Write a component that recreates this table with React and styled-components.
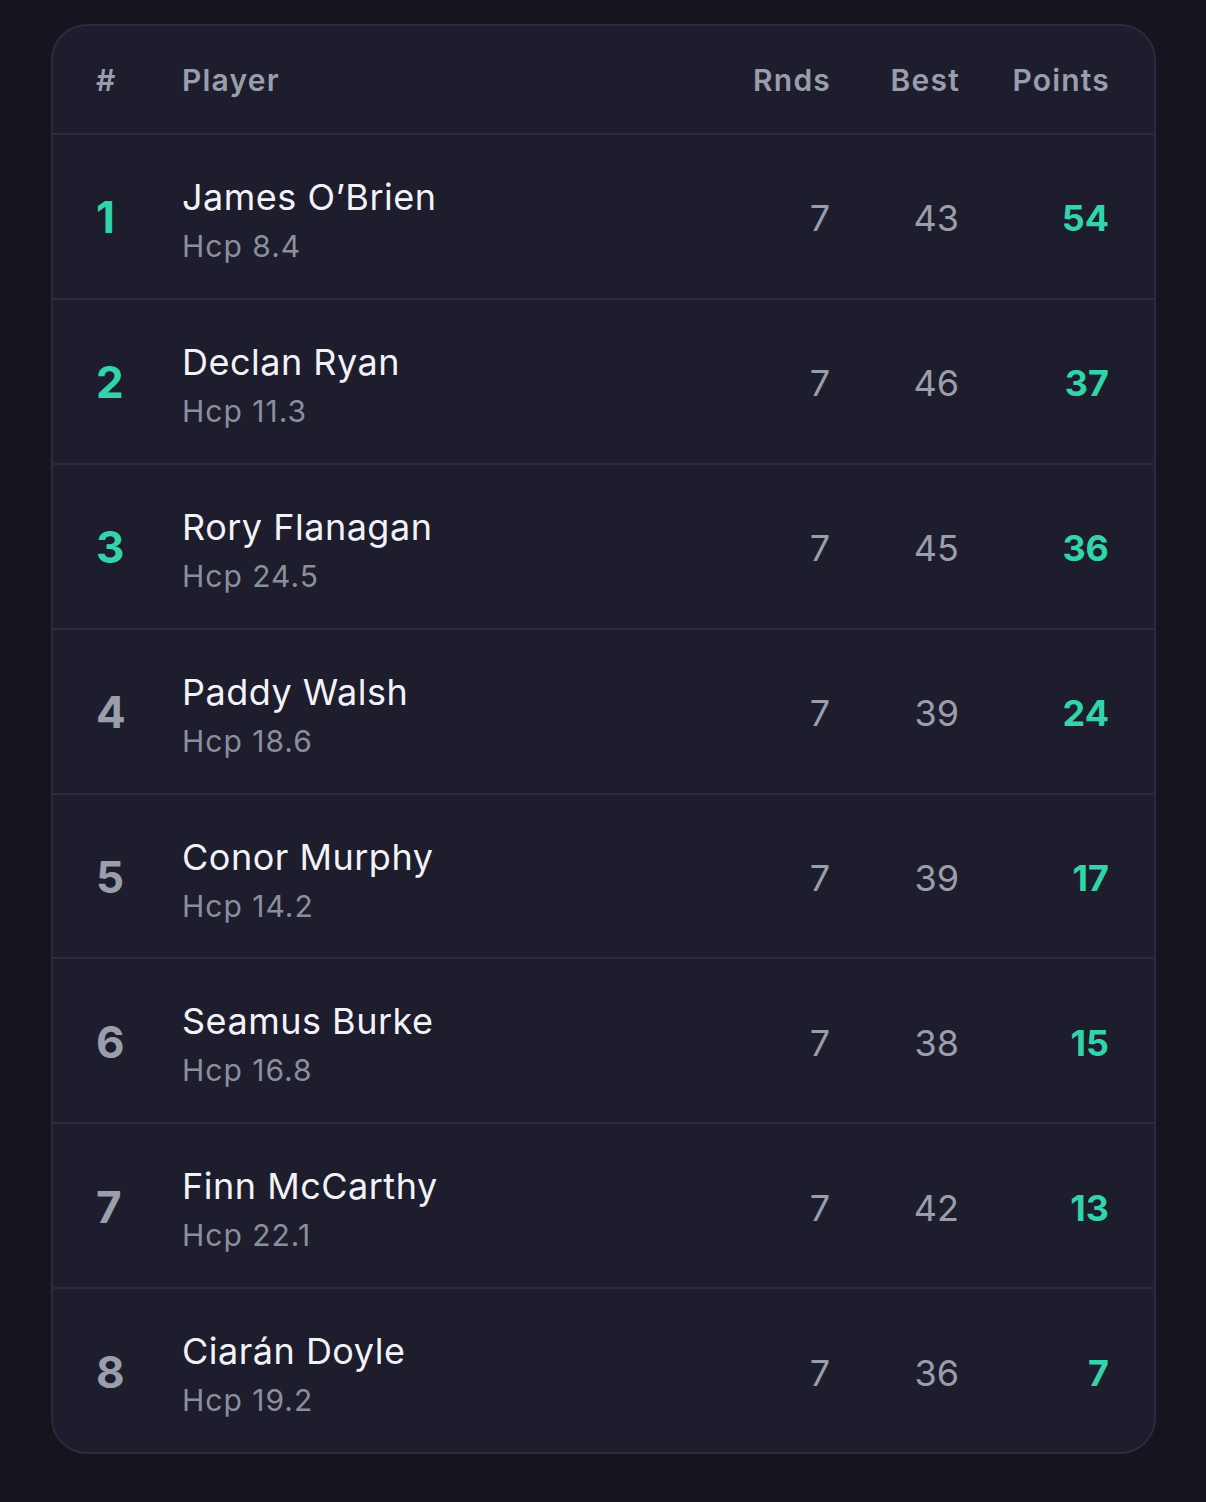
import React from 'react';
import styled, { createGlobalStyle } from 'styled-components';

const GlobalStyle = createGlobalStyle`
  html, body {
    margin: 0;
    padding: 0;
    background: #15151f;
  }
  body {
    font-family: Inter, "Noto Sans", "Liberation Sans", sans-serif;
    -webkit-font-smoothing: antialiased;
  }
`;

const Page = styled.div`
  padding: 24px 50px 48px 51px;
  min-height: 1502px;
  box-sizing: border-box;
`;

const Card = styled.div`
  background: #1d1d2d;
  border: 2px solid #2b2b3d;
  border-radius: 36px;
  overflow: hidden;
`;

const Grid = styled.div`
  display: grid;
  grid-template-columns: 86px 1fr 110px 129px 150px;
  align-items: center;
  padding: 0 45px 0 43px;
`;

const HeaderRow = styled(Grid)`
  height: 107px;
  border-bottom: 2px solid #2b2b3d;
`;

const HeadCell = styled.div`
  font-size: 30px;
  font-weight: 600;
  color: #9a9eab;
  letter-spacing: 1.2px;
  text-align: ${p => (p.$right ? 'right' : 'left')};
  margin-right: ${p => (p.$right ? '-1px' : '0')};
`;

const Row = styled(Grid)`
  height: 162.9px;
  border-bottom: 2px solid #2b2b3d;
  &:last-child {
    border-bottom: none;
  }
`;

const Rank = styled.div`
  font-size: 44px;
  font-weight: 700;
  color: ${p => (p.$top ? '#32d4a9' : '#9a9eab')};
  padding-top: 2px;
`;

const PlayerCell = styled.div`
  display: flex;
  flex-direction: column;
  padding-top: 3px;
`;

const Name = styled.div`
  font-size: 36px;
  line-height: 44px;
  color: #f3f3f7;
  letter-spacing: 0.5px;
`;

const Hcp = styled.div`
  margin-top: 12px;
  font-size: 30px;
  line-height: 30px;
  color: #8b8f9c;
  letter-spacing: 1px;
`;

const Stat = styled.div`
  font-size: 36px;
  text-align: right;
  color: #9a9eab;
  padding-top: 4px;
`;

const Points = styled(Stat)`
  font-weight: 700;
  color: #32d4a9;
`;

const players = [
  { name: 'James O\u2019Brien', hcp: '8.4', rnds: 7, best: 43, pts: 54 },
  { name: 'Declan Ryan', hcp: '11.3', rnds: 7, best: 46, pts: 37 },
  { name: 'Rory Flanagan', hcp: '24.5', rnds: 7, best: 45, pts: 36 },
  { name: 'Paddy Walsh', hcp: '18.6', rnds: 7, best: 39, pts: 24 },
  { name: 'Conor Murphy', hcp: '14.2', rnds: 7, best: 39, pts: 17 },
  { name: 'Seamus Burke', hcp: '16.8', rnds: 7, best: 38, pts: 15 },
  { name: 'Finn McCarthy', hcp: '22.1', rnds: 7, best: 42, pts: 13 },
  { name: 'Ciarán Doyle', hcp: '19.2', rnds: 7, best: 36, pts: 7 },
];

export default function App() {
  return (
    <>
      <GlobalStyle />
      <Page>
        <Card>
          <HeaderRow>
            <HeadCell>#</HeadCell>
            <HeadCell>Player</HeadCell>
            <HeadCell $right>Rnds</HeadCell>
            <HeadCell $right>Best</HeadCell>
            <HeadCell $right>Points</HeadCell>
          </HeaderRow>
          {players.map((p, i) => (
            <Row key={p.name}>
              <Rank $top={i < 3}>{i + 1}</Rank>
              <PlayerCell>
                <Name>{p.name}</Name>
                <Hcp>Hcp {p.hcp}</Hcp>
              </PlayerCell>
              <Stat>{p.rnds}</Stat>
              <Stat>{p.best}</Stat>
              <Points>{p.pts}</Points>
            </Row>
          ))}
        </Card>
      </Page>
    </>
  );
}
